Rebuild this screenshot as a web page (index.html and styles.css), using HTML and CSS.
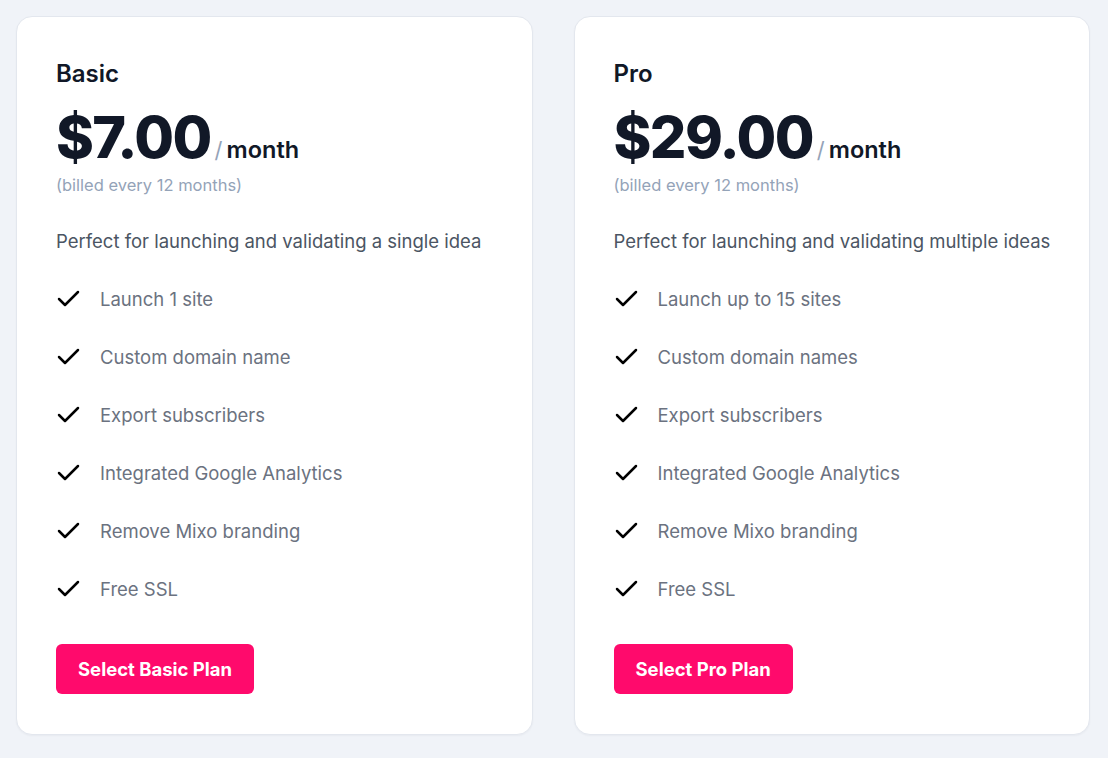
FILE: index.html
```html
<!DOCTYPE html>
<html lang="en">
<head>
<meta charset="utf-8">
<title>Pricing</title>
<link rel="stylesheet" href="styles.css">
</head>
<body>
<main class="plans">
  <section class="card">
    <h2 class="plan-name">Basic</h2>
    <div class="price-row"><span class="price">$7.00</span><span class="slash">/</span><span class="period">month</span></div>
    <p class="billed">(billed every 12 months)</p>
    <p class="desc">Perfect for launching and validating a single idea</p>
    <ul class="features">
      <li><svg class="check" viewBox="0 0 26 26"><path d="M3 13l6 6L22 6"/></svg>Launch 1 site</li>
      <li><svg class="check" viewBox="0 0 26 26"><path d="M3 13l6 6L22 6"/></svg>Custom domain name</li>
      <li><svg class="check" viewBox="0 0 26 26"><path d="M3 13l6 6L22 6"/></svg>Export subscribers</li>
      <li><svg class="check" viewBox="0 0 26 26"><path d="M3 13l6 6L22 6"/></svg>Integrated Google Analytics</li>
      <li><svg class="check" viewBox="0 0 26 26"><path d="M3 13l6 6L22 6"/></svg>Remove Mixo branding</li>
      <li><svg class="check" viewBox="0 0 26 26"><path d="M3 13l6 6L22 6"/></svg>Free SSL</li>
    </ul>
    <button class="select">Select Basic Plan</button>
  </section>
  <section class="card">
    <h2 class="plan-name">Pro</h2>
    <div class="price-row"><span class="price">$29.00</span><span class="slash">/</span><span class="period">month</span></div>
    <p class="billed">(billed every 12 months)</p>
    <p class="desc">Perfect for launching and validating multiple ideas</p>
    <ul class="features">
      <li><svg class="check" viewBox="0 0 26 26"><path d="M3 13l6 6L22 6"/></svg>Launch up to 15 sites</li>
      <li><svg class="check" viewBox="0 0 26 26"><path d="M3 13l6 6L22 6"/></svg>Custom domain names</li>
      <li><svg class="check" viewBox="0 0 26 26"><path d="M3 13l6 6L22 6"/></svg>Export subscribers</li>
      <li><svg class="check" viewBox="0 0 26 26"><path d="M3 13l6 6L22 6"/></svg>Integrated Google Analytics</li>
      <li><svg class="check" viewBox="0 0 26 26"><path d="M3 13l6 6L22 6"/></svg>Remove Mixo branding</li>
      <li><svg class="check" viewBox="0 0 26 26"><path d="M3 13l6 6L22 6"/></svg>Free SSL</li>
    </ul>
    <button class="select">Select Pro Plan</button>
  </section>
</main>
</body>
</html>
```
FILE: styles.css
```css
* { box-sizing: border-box; }
html, body { margin: 0; padding: 0; }
body {
  background: #f0f3f8;
  font-family: Inter, "Noto Sans", sans-serif;
  color: #111827;
}
.plans {
  display: grid;
  grid-template-columns: 1fr 1fr;
  gap: 41px;
  padding: 16px 18px 16px 16px;
}
.card {
  background: #ffffff;
  border: 1px solid #e3e7ee;
  border-radius: 16px;
  padding: 41px 38px 40px 39px;
  box-shadow: 0 1px 2px rgba(15, 23, 42, 0.04);
}
.plan-name {
  margin: 0;
  font-size: 24px;
  line-height: 32px;
  font-weight: 600;
  color: #111827;
}
.price-row {
  display: flex;
  align-items: baseline;
  margin-top: 19px;
  line-height: 1;
}
.price {
  font-size: 57.5px;
  font-weight: 800;
  letter-spacing: -0.028em;
  color: #111827;
}
.slash {
  font-size: 22px;
  color: #94a3b8;
  margin-left: 4px;
  margin-right: 4px;
}
.period {
  font-size: 23.5px;
  font-weight: 600;
  color: #111827;
}
.billed {
  margin: 6px 0 0;
  font-size: 16.5px;
  line-height: 24px;
  color: #94a3b8;
}
.desc {
  margin: 30px 0 0;
  font-size: 18.5px;
  line-height: 28px;
  color: #4b5563;
}
.features {
  list-style: none;
  margin: 30px 0 0;
  padding: 0;
  display: flex;
  flex-direction: column;
  gap: 30px;
}
.features li {
  display: flex;
  align-items: center;
  font-size: 18.5px;
  line-height: 28px;
  color: #6b7280;
}
.check {
  width: 26px;
  height: 26px;
  flex: none;
  margin-right: 18px;
  fill: none;
  stroke: #000000;
  stroke-width: 2.5;
  stroke-linecap: round;
  stroke-linejoin: round;
}
.select {
  margin-top: 41px;
  display: inline-block;
  height: 50px;
  padding: 0 22px;
  border: none;
  border-radius: 6px;
  background: #ff0a6c;
  color: #ffffff;
  font-family: Inter, "Noto Sans", sans-serif;
  font-size: 18.5px;
  font-weight: 700;
  cursor: pointer;
}
```
